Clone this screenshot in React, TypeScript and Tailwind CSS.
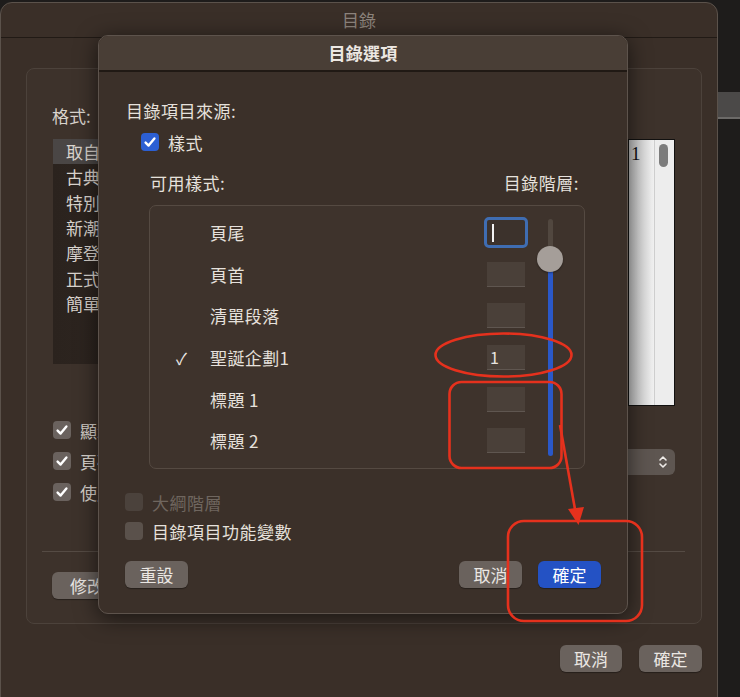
import React from "react";

const CheckMark = ({ className = "" }: { className?: string }) => (
  <svg viewBox="0 0 18 18" className={className}>
    <path d="M4.6 9.6 L7.6 12.6 L13.4 5.4" fill="none" stroke="white" strokeWidth="2.4" strokeLinecap="round" strokeLinejoin="round" />
  </svg>
);

const GrayCheck = () => (
  <div className="w-[18px] h-[18px] shrink-0 rounded-[4px] bg-[#6a625e] flex items-center justify-center">
    <CheckMark className="w-[18px] h-[18px]" />
  </div>
);

const Btn = ({ children, blue = false, w = "w-[63px]" }: { children: React.ReactNode; blue?: boolean; w?: string }) => (
  <div
    className={`${w} h-[27px] rounded-[6px] flex items-center justify-center text-[17px] leading-none ${
      blue ? "bg-[#2452c4] text-white" : "bg-[#6a625d] text-[#ebe7e3]"
    } shadow-[0_1px_1px_rgba(0,0,0,0.35)]`}
  >
    {children}
  </div>
);

const rows = [
  { name: "頁尾", value: "", focus: true, check: false },
  { name: "頁首", value: "", focus: false, check: false },
  { name: "清單段落", value: "", focus: false, check: false },
  { name: "聖誕企劃1", value: "1", focus: false, check: true },
  { name: "標題 1", value: "", focus: false, check: false },
  { name: "標題 2", value: "", focus: false, check: false },
];

const leftItems = ["取自範本", "古典", "特別", "新潮", "摩登", "正式", "簡單"];

export default function App() {
  return (
    <div className="relative w-[740px] h-[697px] overflow-hidden bg-[#1e1c1b] font-['Noto_Sans_CJK_TC',sans-serif] flex items-start pt-[2px]">
      {/* Back window */}
      <div className="w-[718px] h-[710px] shrink-0 rounded-t-[12px] border border-[#5b524b] bg-[#3a2f28] flex flex-col">
        <div className="h-[35px] shrink-0 flex items-center justify-center text-[17px] text-[#8d847d] border-b border-[#211a15]">
          目錄
        </div>
        {/* Group box */}
        <div className="mt-[30px] ml-[25px] w-[676px] h-[556px] rounded-[8px] border border-[#4c423b] bg-[#3d322b] flex flex-col">
          <div className="h-[482px] flex justify-between">
            <div className="pl-[25px] w-[71px] overflow-hidden flex flex-col">
              <div className="mt-[37px] h-[20px] leading-[20px] text-[17px] text-[#d9d3cd] whitespace-nowrap">格式:</div>
              <div className="mt-[13px] ml-[1px] w-[200px] h-[225px] shrink-0 bg-gradient-to-r from-[#2b231e] to-[#332a24] flex flex-col text-[17px] text-[#d9d3cd]">
                {leftItems.map((t, i) => (
                  <div
                    key={t}
                    className={`h-[25.3px] flex items-center pl-[13px] leading-none whitespace-nowrap ${i === 0 ? "bg-[#4a4645]" : ""}`}
                  >
                    {t}
                  </div>
                ))}
              </div>
              <div className="mt-[56px] ml-[1px] flex flex-col gap-[11px]">
                {["顯示頁碼", "頁碼靠右對齊", "使用超連結"].map((t) => (
                  <div key={t} className="h-[20px] flex items-center gap-[9px] text-[17px] text-[#d9d3cd] whitespace-nowrap">
                    <GrayCheck />
                    <span className="leading-none">{t}</span>
                  </div>
                ))}
              </div>
            </div>
            <div className="pr-[26px] flex flex-col">
              <div className="mt-[70px] w-[47px] h-[267px] border border-[#121110] flex">
                <div className="w-[25px] h-full bg-gradient-to-r from-[#bdbdbd] to-[#f1f1f1] pl-[2px] pt-[4px] font-['Liberation_Serif',serif] text-[19px] leading-none text-[#111]">
                  1
                </div>
                <div className="w-[1px] h-full bg-[#cfcfcf]" />
                <div className="flex-1 h-full bg-[#ededed] pl-[4px] pt-[4px]">
                  <div className="w-[9px] h-[23px] rounded-full bg-[#7c7c7c]" />
                </div>
              </div>
              <div className="mt-[43px] w-[47px] h-[26px] rounded-r-[6px] bg-[#5e5651] flex items-center justify-end pr-[6px]">
                <svg viewBox="0 0 12 18" className="w-[12px] h-[18px]">
                  <path d="M3 7 L6 4 L9 7 M3 11 L6 14 L9 11" fill="none" stroke="#efebe8" strokeWidth="1.6" strokeLinecap="round" strokeLinejoin="round" />
                </svg>
              </div>
            </div>
          </div>
          <div className="ml-[15px] w-[643px] h-[1px] bg-[#554b44]" />
          <div className="mt-[20px] pl-[25px]">
            <Btn w="w-[70px]">修改</Btn>
          </div>
        </div>
        <div className="mt-[21px] pr-[15px] flex justify-end gap-[17px]">
          <Btn w="w-[62px]">取消</Btn>
          <Btn>確定</Btn>
        </div>
      </div>
      {/* desktop strip at right */}
      <div className="flex-1 flex flex-col">
        <div className="mt-[90px] h-[25px] bg-[#4b4948]" />
        <div className="h-[2px] bg-[#6c6a68]" />
      </div>

      {/* Sheet dialog */}
      <div className="absolute left-[98px] top-[35px] w-[530px] h-[579px] rounded-[10px] overflow-hidden border border-[#5d534c] bg-[#3b3029] shadow-[0_4px_22px_rgba(0,0,0,0.6)] flex flex-col text-[#e6e1dc]">
        <div className="h-[36px] shrink-0 bg-[#493e36] border-b-2 border-[#201914] flex items-center justify-center text-[17px] font-semibold text-[#ece7e2] tracking-[0.3px]">
          目錄選項
        </div>
        <div className="pl-[26px] pr-[26px] flex flex-col">
          <div className="mt-[29px] h-[20px] leading-[20px] text-[17px] tracking-[0.5px] pl-[1px]">目錄項目來源:</div>
          <div className="mt-[11px] ml-[16px] h-[20px] flex items-center gap-[9px] text-[17px]">
            <div className="w-[18px] h-[18px] rounded-[4px] bg-[#2c5fd3] flex items-center justify-center">
              <CheckMark className="w-[18px] h-[18px]" />
            </div>
            <span className="leading-none tracking-[0.5px]">樣式</span>
          </div>
          <div className="mt-[21px] h-[20px] flex justify-between pl-[25px] pr-[22px] text-[17px] leading-[20px] tracking-[0.5px]">
            <span>可用樣式:</span>
            <span>目錄階層:</span>
          </div>
          <div className="mt-[12px] ml-[24px] w-[436px] h-[264px] rounded-[7px] border border-[#554a42] bg-[#3e332c] flex">
            <div className="w-[375px] pt-[6px] flex flex-col">
              {rows.map((r) => (
                <div key={r.name} className="h-[41.6px] flex items-center">
                  <div className="w-[60px] pl-[26px] text-[16px] leading-none text-[#ece8e4]">{r.check ? "✓" : ""}</div>
                  <div className="w-[277px] text-[17px] leading-none tracking-[0.4px] text-[#e6e1dc]">{r.name}</div>
                  <div
                    className={`w-[38px] h-[25px] flex items-center pl-[3px] text-[16px] leading-none text-[#e8e4e0] ${
                      r.focus
                        ? "bg-[#3c322c] outline-[3px] outline-solid outline-[#3f6db2] rounded-[2px]"
                        : "bg-[#4a4039] border-b border-[#5f5650]"
                    }`}
                  >
                    {r.focus ? <div className="ml-[2px] w-[1.5px] h-[18px] bg-[#f2f2f2]" /> : r.value}
                  </div>
                </div>
              ))}
            </div>
            <div className="ml-[12px] mt-[13px] w-[26px] h-[237px] relative flex flex-col items-center">
              <div className="w-[5px] h-[40px] bg-[#51473f] rounded-t-full" />
              <div className="w-[5px] flex-1 bg-[#2a58c8] rounded-b-full" />
              <div className="absolute left-0 top-[27px] w-[26px] h-[26px] rounded-full bg-[#a59e99] shadow-[0_1px_2px_rgba(0,0,0,0.4)]" />
            </div>
          </div>
          <div className="mt-[23px] h-[20px] flex items-center gap-[9px] text-[17px]">
            <div className="w-[18px] h-[18px] rounded-[4px] bg-[#4b423c]" />
            <span className="leading-none tracking-[0.5px] text-[#6f665f]">大綱階層</span>
          </div>
          <div className="mt-[9px] h-[20px] flex items-center gap-[9px] text-[17px]">
            <div className="w-[18px] h-[18px] rounded-[4px] bg-[#5a514b]" />
            <span className="leading-none tracking-[0.5px]">目錄項目功能變數</span>
          </div>
          <div className="mt-[20px] flex items-center">
            <Btn>重設</Btn>
            <div className="flex-1" />
            <div className="flex gap-[16px]">
              <Btn>取消</Btn>
              <Btn blue>確定</Btn>
            </div>
          </div>
        </div>
      </div>

      {/* Red annotations */}
      <svg className="absolute left-0 top-0 pointer-events-none" width="740" height="697" viewBox="0 0 740 697">
        <g fill="none" stroke="#e5311d" strokeWidth="2.6">
          <ellipse cx="503.5" cy="355" rx="68" ry="21.5" />
          <rect x="449.5" y="382" width="112" height="86" rx="12" />
          <rect x="508" y="521" width="134" height="100" rx="16" />
          <line x1="560" y1="425" x2="575.5" y2="512" />
        </g>
        <polygon points="568,509 584,507 578.5,525" fill="#e5311d" />
      </svg>
    </div>
  );
}
